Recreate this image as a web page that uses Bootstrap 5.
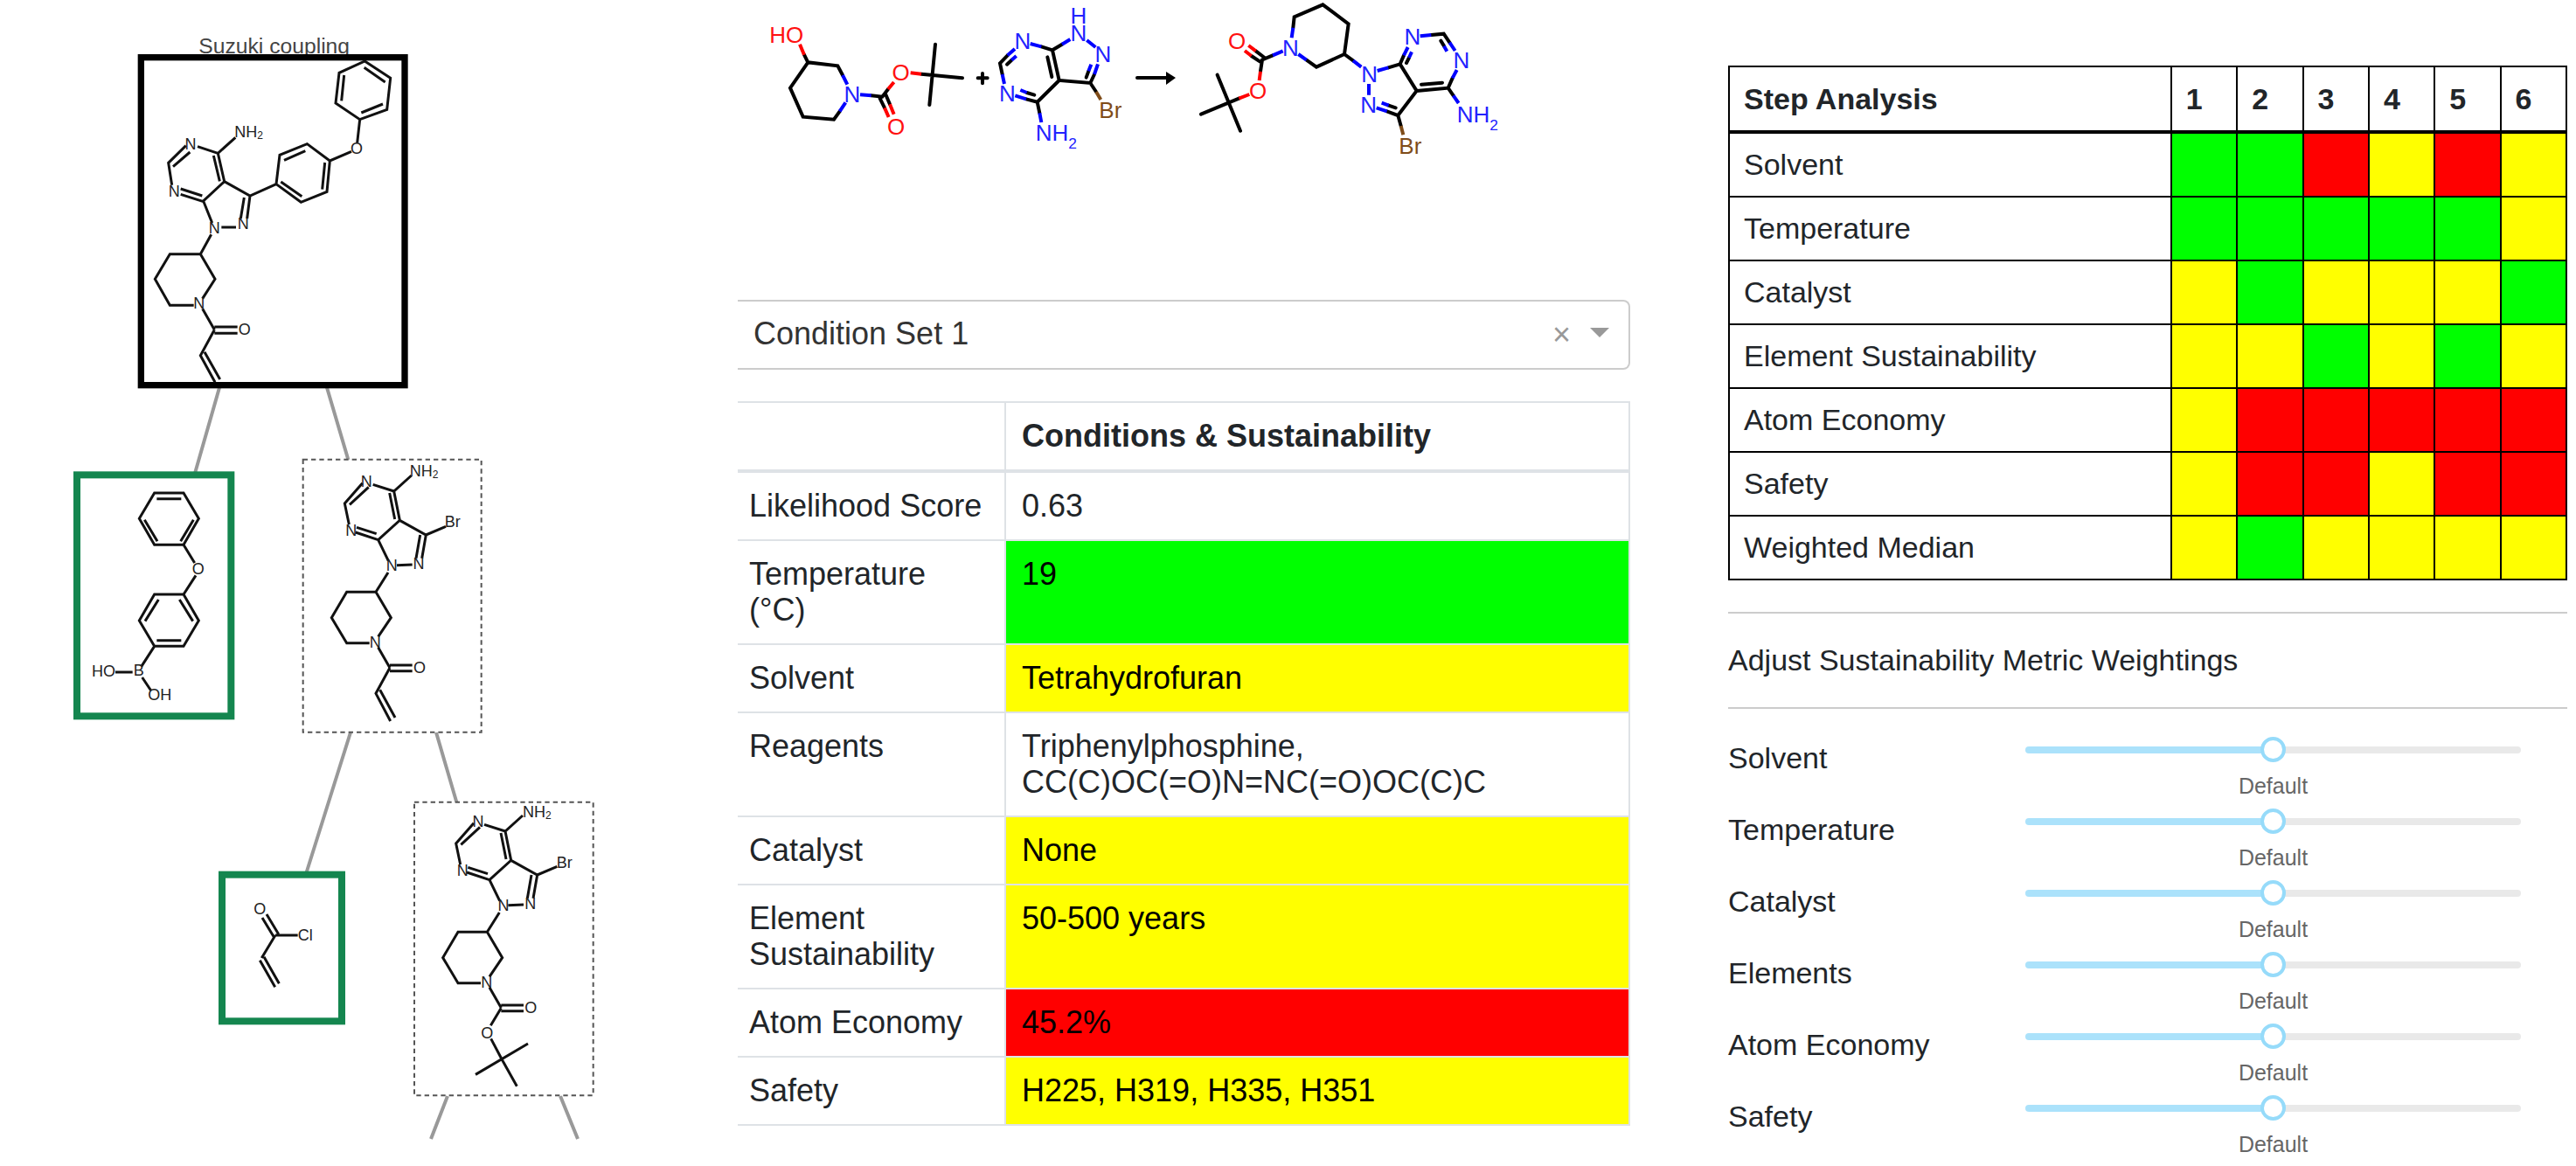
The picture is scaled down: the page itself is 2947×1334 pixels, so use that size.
<!DOCTYPE html>
<html lang="en">
<head>
<meta charset="utf-8">
<meta name="viewport" content="width=device-width, initial-scale=1">
<title>Route Sustainability</title>
<link href="https://cdn.jsdelivr.net/npm/bootstrap@5.3.0/dist/css/bootstrap.min.css" rel="stylesheet">
<style>
  body { font-family: "Liberation Sans", Arial, sans-serif; color: #212529; background: #fff; }
  .tree-pane { flex: 844 1 0; min-width: 0; }
  .conditions-pane { flex: 1021 1 0; min-width: 0; font-size: 36px; line-height: 41px; }
  .analysis-pane { flex: 960 1 0; min-width: 0; margin-left: 112px; margin-right: 10px; padding-top: 75px; font-size: 34px; line-height: 38px; }
  svg text { font-family: "Liberation Sans", Arial, sans-serif; }

  /* route tree */
  .edge { stroke: #999; stroke-width: 4; fill: none; }
  .bond { stroke: #111; stroke-width: 9; fill: none; }
  .atom { fill: #222; font-size: 54px; }
  .mid { text-anchor: middle; }
  .box-target { fill: #fff; stroke: #000; stroke-width: 22; }
  .box-stock { fill: #fff; stroke: #14864f; stroke-width: 24; }
  .box-step { fill: #fff; stroke: #555; stroke-width: 6; stroke-dasharray: 16 12; }

  /* reaction drawing */
  .rx path { stroke-width: 12; fill: none; }
  .rx text { font-size: 78px; }
  .ck { stroke: #000; stroke-linecap: round; } .cn { stroke: #00f; } .co { stroke: #f00; } .cb { stroke: #7f4c19; }
  .rx .shaft { stroke-width: 4; }
  .tn { fill: #22f; } .to { fill: #f11; } .tb { fill: #7f4c19; }

  /* condition picker */
  .picker .form-select { appearance: none; height: 80px; padding: 0 110px 3px 18px; font-size: 36px; line-height: 41px; color: #333;
    background: #fff; border: 2px solid #ccc; border-left: 0; border-radius: 0 8px 8px 0; }
  .picker-tools { top: 0; right: 24px; height: 80px; gap: 22px; pointer-events: none; }
  .picker-tools button { border: 0; padding: 0; background: none; color: #999; font-size: 36px; line-height: 40px; pointer-events: auto; }
  .picker-tools svg { margin-bottom: 6px; }

  /* tables */
  .cond-table { table-layout: fixed; margin: 36px 0 0; border-color: #dee2e6; color: #212529; }
  .cond-table > :not(caption) > * > * { border: 2px solid #dee2e6; padding: 17px 18px 18px; font-weight: 400; text-align: left; }
  .cond-table > :not(caption) > * > :first-child { border-left: 0; padding-left: 13px; width: 30%; }
  .cond-table > thead > tr > * { border-bottom-width: 4px; font-weight: 700; }
  .step-table { table-layout: fixed; margin: 0; border-color: #000; color: #212529; }
  .step-table > :not(caption) > * > * { border: 2px solid #000; padding: 17px 16px; font-weight: 400; text-align: left; }
  .step-table > tbody > tr > * { padding-top: 16px; }
  .step-table > thead > tr > * { border-bottom-width: 4px; font-weight: 700; }
  .col-metric { width: 52.8%; }
  .table > tbody > tr > .good { background-color: #0f0; color: #000; }
  .table > tbody > tr > .fair { background-color: #ff0; color: #000; }
  .table > tbody > tr > .poor { background-color: #f00; color: #000; }

  /* weightings */
  .rule { margin: 0; border: 0; border-top: 2px solid #ccc; opacity: 1; }
  .step-table + .rule { margin-top: 36px; }
  .weights-title { margin: 0; padding: 34px 0 35px; font-size: 34px; line-height: 38px; font-weight: 400; }
  .weights { padding-top: 28px; }
  .weight-row { height: 82px; }
  .weight-row label { width: 35.4%; padding-top: 9px; }
  .weight-slider { width: 59.1%; }
  .weight-slider input { appearance: none; display: block; width: 100%; height: 38px; margin: 0 0 7px; background: none; }
  .weight-slider input::-webkit-slider-runnable-track { height: 8px; border-radius: 4px; background: linear-gradient(to right, #abe2fb 50%, #e9e9e9 50%); }
  .weight-slider input::-webkit-slider-thumb { -webkit-appearance: none; width: 29px; height: 29px; margin-top: -11px; border: 4px solid #96dbfa; border-radius: 50%; background: #fff; }
  .weight-slider output { font-size: 25px; line-height: 30px; color: #666; }
</style>
</head>
<body>
<main class="d-flex align-items-start">

  <section class="tree-pane" aria-label="Synthesis route">
    <svg class="d-block w-100" viewBox="0 0 844 1320" role="img" aria-label="Retrosynthesis tree">
      <path class="edge" d="M252 440L222 545M373 440L399 528M401 838L350 1000M499 838L523 920M512 1254L493 1303M641 1254L661 1303"/>

      <!-- target: ibrutinib -->
      <svg x="60" y="20" width="500" height="440" viewBox="0 0 1500 1320">
        <text x="502" y="122" font-size="74" fill="#444">Suzuki coupling</text>
        <rect class="box-target" x="304" y="137" width="905" height="1125"/>
        <path class="bond" d="M1072 150L1160 208L1148 316L1055 350L972 294L984 190ZM1070 172L1142 222M1001 198L992 286M1060 327L1134 297
          M1055 350L1046 430M1026 460L952 492L874 434L780 472L768 572L853 634L942 598L952 492M795 490L868 458M935 498L926 590M784 564L856 614
          M768 572L678 612L590 563L518 630L548 705M580 720H630M678 612L668 690M658 618L646 690M568 466L590 563M553 474L574 562M568 466L498 443
          M458 440L398 499L410 575M472 462L414 512M440 607L518 632M440 588L514 612M568 466L628 412
          M545 745L508 812H403L352 898L403 988H485M515 965L558 898L508 812M515 1000L556 1072M556 1062H635M556 1084H635
          M556 1072L508 1160L558 1252M522 1148L575 1242"/>
        <g class="atom">
          <text x="625" y="412">NH<tspan font-size="36" dy="6">2</tspan></text>
          <text class="mid" x="1044" y="468">O</text><text class="mid" x="474" y="452">N</text>
          <text class="mid" x="418" y="614">N</text><text class="mid" x="556" y="741">N</text>
          <text class="mid" x="655" y="726">N</text><text class="mid" x="503" y="1000">N</text>
          <text class="mid" x="659" y="1090">O</text>
        </g>
      </svg>

      <!-- first generation of precursors -->
      <svg x="60" y="440" width="520" height="420" viewBox="0 0 1560 1260">
        <rect class="box-stock" x="84" y="310" width="529" height="828"/>
        <path class="bond" d="M350 372H450L502 460L450 550H350L298 460ZM358 392H442M484 464L440 538M316 464L360 538M450 550L488 612
          M492 655L450 720H350L298 810L350 898H450L502 810L450 720M436 738L482 812M364 738L318 812M358 878H442M350 898L305 968
          M216 987H275M308 1005L338 1050"/>
        <g class="atom">
          <text class="mid" x="500" y="652">O</text><text class="mid" x="296" y="1000">B</text>
          <text x="216" y="1002" text-anchor="end">HO</text><text x="328" y="1084">OH</text>
        </g>
        <rect class="box-step" x="860" y="257" width="612" height="936"/>
        <path id="scaffold" class="bond" d="M1100 343L1172 366L1232 312M1172 366L1192 466L1118 533L1153 605M1157 372L1175 462M1192 466L1282 516L1350 487
          M1282 516L1268 596M1262 516L1248 596M1235 618L1182 620M1040 507L1118 533M1044 490L1112 512M1018 480L1003 408L1064 338M1020 412L1085 352
          M1152 645L1110 712H1010L958 800L1010 887H1088M1118 865L1162 800L1110 712M1118 902L1158 972M1158 963H1235M1158 983H1235"/>
        <path class="bond" d="M1158 972L1110 1060L1160 1155M1124 1048L1176 1143"/>
        <g class="atom">
          <text x="1226" y="316">NH<tspan font-size="36" dy="6">2</tspan></text><text x="1346" y="490">Br</text>
          <text class="mid" x="1078" y="350">N</text><text class="mid" x="1025" y="520">N</text>
          <text class="mid" x="1257" y="632">N</text><text class="mid" x="1165" y="640">N</text>
          <text class="mid" x="1108" y="904">N</text><text class="mid" x="1260" y="991">O</text>
        </g>
      </svg>

      <!-- second generation of precursors -->
      <svg x="220" y="840" width="480" height="480" viewBox="0 0 1440 1440">
        <rect class="box-stock" x="102" y="482" width="411" height="503"/>
        <path class="bond" d="M255 618L296 686M240 630L280 696M285 690H362M285 690L238 768M232 776L284 868M246 764L298 856"/>
        <g class="atom"><text class="mid" x="232" y="618">O</text><text x="362" y="708">Cl</text></g>
        <rect class="box-step" x="762" y="233" width="614" height="1007"/>
        <use href="#scaffold" x="-98" y="-33"/>
        <path class="bond" d="M1060 940L1024 1000M1025 1045L1062 1115L1114 1208M1152 1062L972 1168"/>
        <g class="atom">
          <text x="1134" y="284">NH<tspan font-size="36" dy="6">2</tspan></text><text x="1250" y="458">Br</text>
          <text class="mid" x="981" y="317">N</text><text class="mid" x="928" y="487">N</text>
          <text class="mid" x="1160" y="599">N</text><text class="mid" x="1068" y="607">N</text>
          <text class="mid" x="1010" y="870">N</text><text class="mid" x="1162" y="958">O</text>
          <text class="mid" x="1012" y="1043">O</text>
        </g>
      </svg>
    </svg>
  </section>

  <section class="conditions-pane">
    <svg class="rx d-block w-100" viewBox="0 0 1021 343" role="img" aria-label="Reaction scheme">
      <svg x="-4" y="0" width="480" height="190" viewBox="0 0 1440 570">
        <path class="ck" d="M240 188L253 214L355 226L372 258M253 214L192 302L236 401L342 410L362 382M470 328L508 332L528 306M642 254L783 268M690 152L670 360M500 338L516 370M520 325L534 358"/>
        <path class="co" d="M225 152L240 188M528 306L548 282M605 250L642 254M516 370L530 402M534 358L548 392"/>
        <path class="cn" d="M372 258L388 290M362 382L382 352M432 325L470 328"/>
        <path class="ck" d="M836 268H869M852 252V286"/>
        <path class="ck" d="M1054 160L1092 172L1125 152M1092 172L1115 276L1222 285L1236 255M1075 196L1090 264M1208 266L1216 244M1222 285L1242 315M1115 276L1040 350L1002 340M1030 326L1004 318M1040 350L1048 388M938 190L912 217L920 255M936 221L952 206"/>
        <path class="cn" d="M1016 150L1054 160M1125 152L1153 135M1210 138L1240 162M1236 255L1248 220M1216 244L1225 221M1002 340L964 328M982 309L1004 318M1048 388L1054 420M938 190L963 168M952 206L968 192M920 255L927 288"/>
        <path class="cb" d="M1242 315L1258 342"/>
        <text class="to" x="238" y="147" text-anchor="end">HO</text><text class="to mid" x="572" y="276">O</text><text class="to mid" x="555" y="461">O</text>
        <g class="tn">
          <text class="mid" x="405" y="350">N</text>
          <text class="mid"><tspan x="1182" y="80">H</tspan><tspan x="1182" y="142">N</tspan></text>
          <text class="mid" x="990" y="168">N</text><text class="mid" x="1266" y="213">N</text><text class="mid" x="937" y="349">N</text>
          <text x="1034" y="483">NH<tspan font-size="52" dy="28">2</tspan></text>
        </g>
        <text class="tb mid" x="1291" y="405">Br</text>
      </svg>
      <path class="ck shaft" d="M457 89H492"/>
      <polygon points="490,82 501,89 490,97"/>
      <svg x="476" y="0" width="440" height="190" viewBox="0 0 1320 570">
        <path class="ck" d="M350 175L380 198M335 192L365 212M408 190L372 205L366 245M478 95L482 58L580 16L668 82L654 186L558 230L524 206M292 338L162 392M218 257L297 449M654 186L684 208M805 232L845 220L858 190M867 216L876 198M800 382L838 396L848 432M830 370L806 362M838 396L902 312L845 220M952 120L995 116L1015 146M985 140L996 158M902 312L1010 302L1025 268M918 290L990 284M1010 302L1028 328"/>
        <path class="co" d="M325 156L350 175M312 174L335 192M366 245L362 276M328 324L292 338"/>
        <path class="cn" d="M408 190L443 175M473 130L478 95M524 206L496 186M684 208L712 230M767 243L805 232M738 288V326M764 370L800 382M782 353L806 362M858 190L872 162M876 198L885 178M914 124L952 120M1015 146L1034 174M996 158L1006 176M1040 240L1025 268M1028 328L1046 354"/>
        <path class="cb" d="M848 432L856 463"/>
        <text class="to mid" x="285" y="168">O</text><text class="to mid" x="357" y="340">O</text>
        <g class="tn">
          <text class="mid" x="469" y="191">N</text><text class="mid" x="740" y="281">N</text><text class="mid" x="737" y="388">N</text>
          <text class="mid" x="888" y="153">N</text><text class="mid" x="1056" y="234">N</text>
          <text x="1040" y="419">NH<tspan font-size="52" dy="28">2</tspan></text>
        </g>
        <text class="tb mid" x="880" y="527">Br</text>
      </svg>
    </svg>

    <div class="picker position-relative">
      <select class="form-select" aria-label="Condition set"><option>Condition Set 1</option></select>
      <div class="picker-tools position-absolute d-flex align-items-center">
        <button type="button" aria-label="Clear">×</button>
        <svg width="22" height="11" viewBox="0 0 22 11" aria-hidden="true"><path d="M0 0H22L11 11Z" fill="#999"/></svg>
      </div>
    </div>

    <table class="table cond-table">
      <thead><tr><th></th><th scope="col">Conditions &amp; Sustainability</th></tr></thead>
      <tbody>
        <tr><th scope="row">Likelihood Score</th><td>0.63</td></tr>
        <tr><th scope="row">Temperature (°C)</th><td class="good">19</td></tr>
        <tr><th scope="row">Solvent</th><td class="fair">Tetrahydrofuran</td></tr>
        <tr><th scope="row">Reagents</th><td>Triphenylphosphine,<br>CC(C)OC(=O)N=NC(=O)OC(C)C</td></tr>
        <tr><th scope="row">Catalyst</th><td class="fair">None</td></tr>
        <tr><th scope="row">Element Sustainability</th><td class="fair">50-500 years</td></tr>
        <tr><th scope="row">Atom Economy</th><td class="poor">45.2%</td></tr>
        <tr><th scope="row">Safety</th><td class="fair">H225, H319, H335, H351</td></tr>
      </tbody>
    </table>
  </section>

  <section class="analysis-pane">
    <table class="table step-table">
      <colgroup><col class="col-metric"><col span="6"></colgroup>
      <thead><tr><th scope="col">Step Analysis</th><th scope="col">1</th><th scope="col">2</th><th scope="col">3</th><th scope="col">4</th><th scope="col">5</th><th scope="col">6</th></tr></thead>
      <tbody>
        <tr><th scope="row">Solvent</th><td class="good"></td><td class="good"></td><td class="poor"></td><td class="fair"></td><td class="poor"></td><td class="fair"></td></tr>
        <tr><th scope="row">Temperature</th><td class="good"></td><td class="good"></td><td class="good"></td><td class="good"></td><td class="good"></td><td class="fair"></td></tr>
        <tr><th scope="row">Catalyst</th><td class="fair"></td><td class="good"></td><td class="fair"></td><td class="fair"></td><td class="fair"></td><td class="good"></td></tr>
        <tr><th scope="row">Element Sustainability</th><td class="fair"></td><td class="fair"></td><td class="good"></td><td class="fair"></td><td class="good"></td><td class="fair"></td></tr>
        <tr><th scope="row">Atom Economy</th><td class="fair"></td><td class="poor"></td><td class="poor"></td><td class="poor"></td><td class="poor"></td><td class="poor"></td></tr>
        <tr><th scope="row">Safety</th><td class="fair"></td><td class="poor"></td><td class="poor"></td><td class="fair"></td><td class="poor"></td><td class="poor"></td></tr>
        <tr><th scope="row">Weighted Median</th><td class="fair"></td><td class="good"></td><td class="fair"></td><td class="fair"></td><td class="fair"></td><td class="fair"></td></tr>
      </tbody>
    </table>

    <hr class="rule">
    <h2 class="weights-title">Adjust Sustainability Metric Weightings</h2>
    <hr class="rule">

    <form class="weights">
      <div class="weight-row d-flex"><label for="w1">Solvent</label><div class="weight-slider text-center"><input type="range" id="w1"><output for="w1" class="d-block">Default</output></div></div>
      <div class="weight-row d-flex"><label for="w2">Temperature</label><div class="weight-slider text-center"><input type="range" id="w2"><output for="w2" class="d-block">Default</output></div></div>
      <div class="weight-row d-flex"><label for="w3">Catalyst</label><div class="weight-slider text-center"><input type="range" id="w3"><output for="w3" class="d-block">Default</output></div></div>
      <div class="weight-row d-flex"><label for="w4">Elements</label><div class="weight-slider text-center"><input type="range" id="w4"><output for="w4" class="d-block">Default</output></div></div>
      <div class="weight-row d-flex"><label for="w5">Atom Economy</label><div class="weight-slider text-center"><input type="range" id="w5"><output for="w5" class="d-block">Default</output></div></div>
      <div class="weight-row d-flex"><label for="w6">Safety</label><div class="weight-slider text-center"><input type="range" id="w6"><output for="w6" class="d-block">Default</output></div></div>
    </form>
  </section>
</main>
<script src="https://cdn.jsdelivr.net/npm/bootstrap@5.3.0/dist/js/bootstrap.bundle.min.js"></script>
</body>
</html>
